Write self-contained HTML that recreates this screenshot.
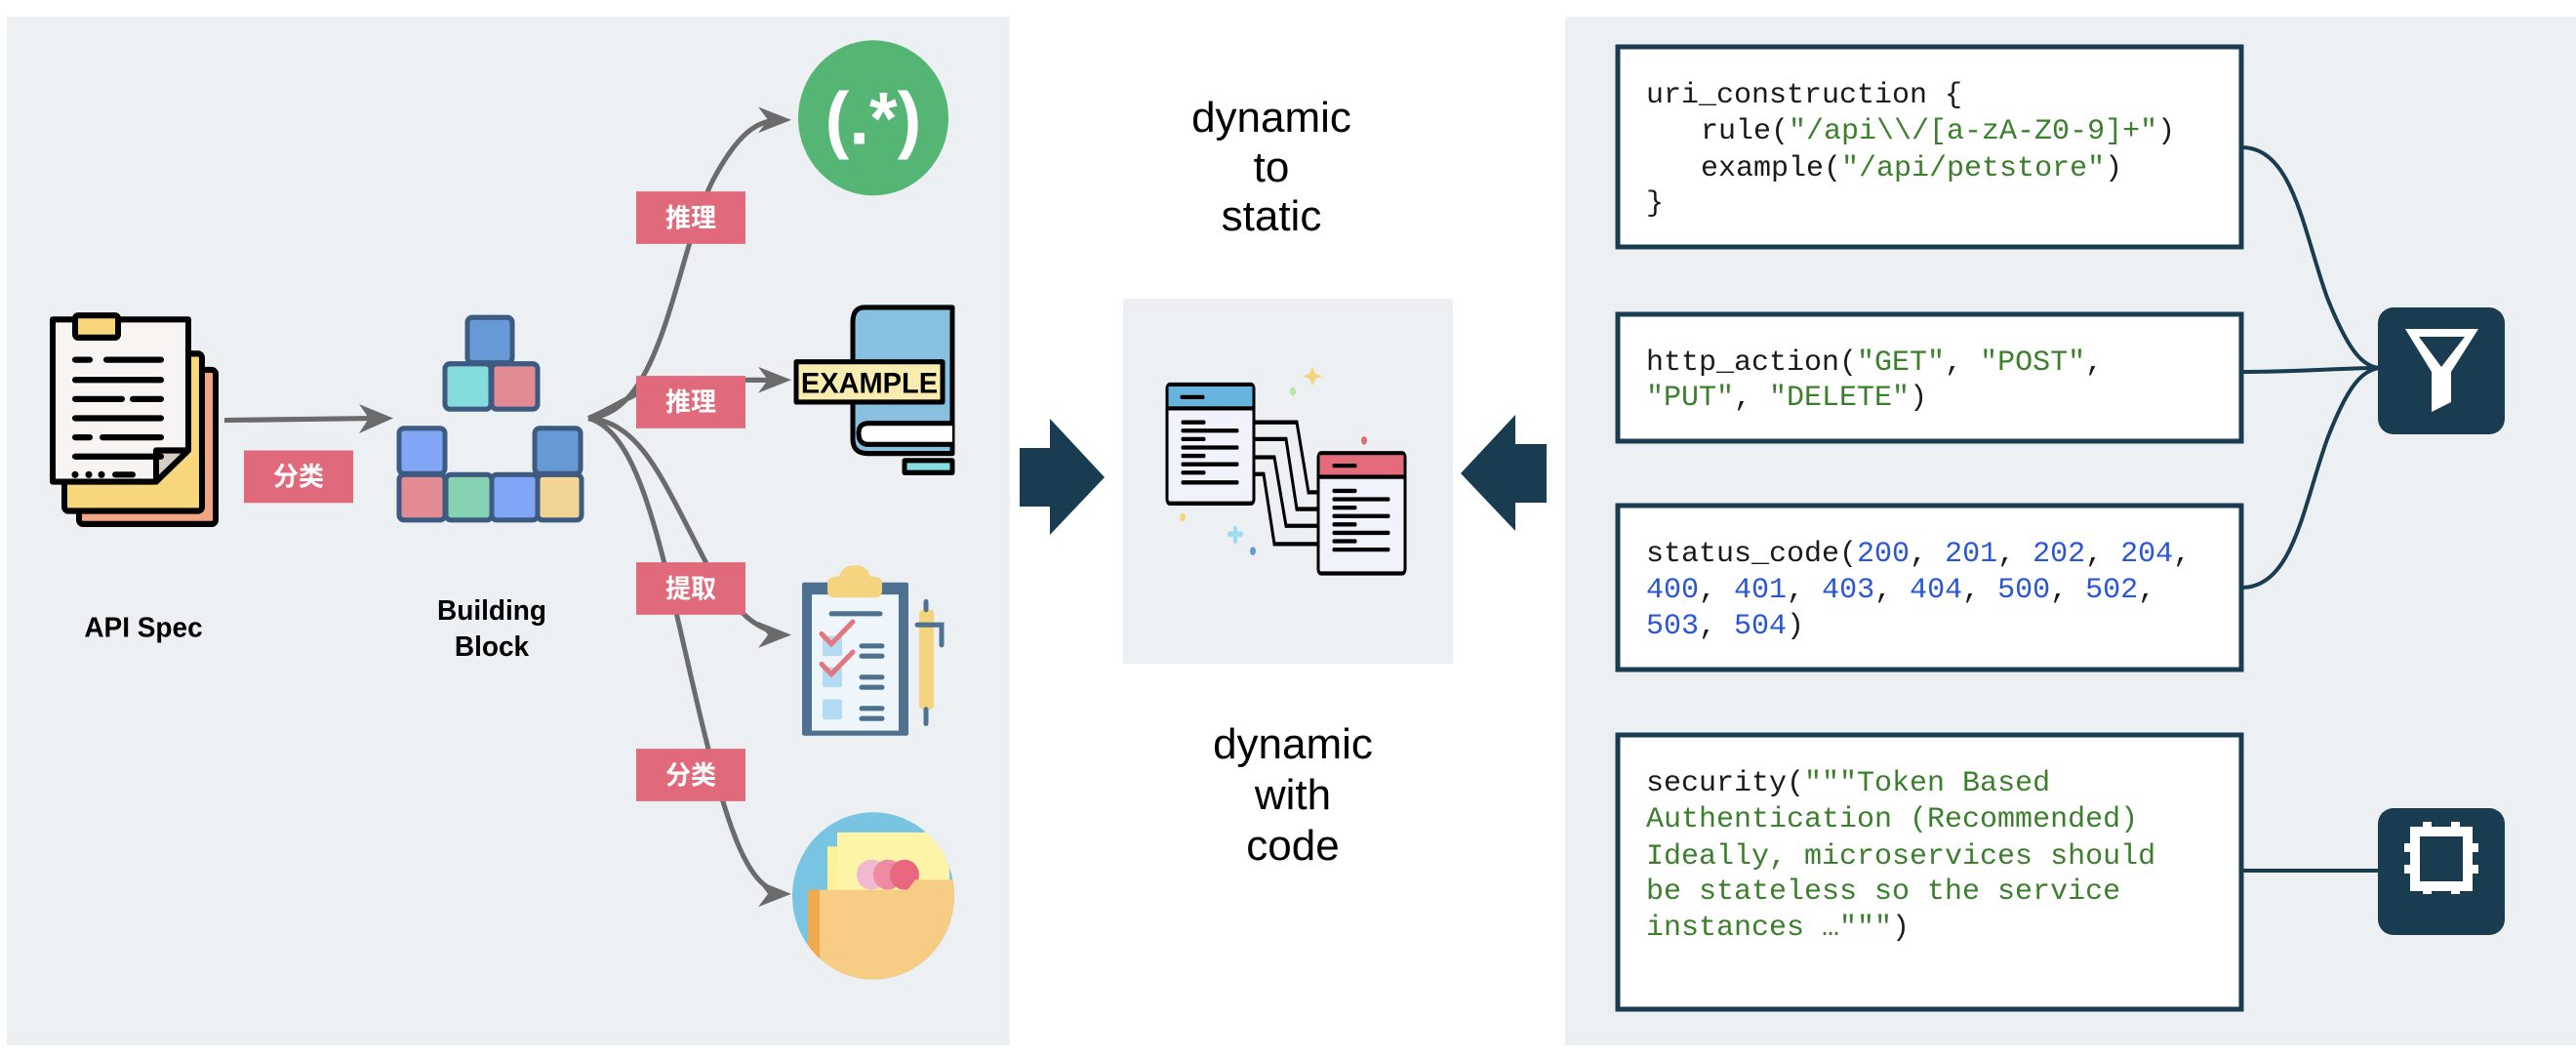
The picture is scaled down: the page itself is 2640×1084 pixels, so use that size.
<!DOCTYPE html>
<html><head><meta charset="utf-8"><style>
html,body{margin:0;padding:0;background:#fff;}
svg{display:block}
.m{font-family:"Liberation Mono",monospace;font-size:30px;}
.s{font-family:"Liberation Sans","DejaVu Sans",sans-serif;}
.cj{font-family:"Liberation Sans","Noto Sans CJK SC",sans-serif;font-weight:bold;font-size:26px;fill:#fff;}
.g{fill:#3b7f2d}.b{fill:#2a56d6}.k{fill:#1a1a1a}
</style></head><body>
<svg width="2640" height="1084" viewBox="0 0 2640 1084" xmlns="http://www.w3.org/2000/svg">
<rect width="2640" height="1084" fill="#fff"/>
<rect x="7" y="17" width="1028" height="1054" fill="#edf0f3"/>
<rect x="1604" y="17" width="1036" height="1054" fill="#edf0f3"/>

<g transform="scale(1,1.0325)">
<!-- API spec doc -->
<g stroke="#000" stroke-width="6" stroke-linejoin="round">
<rect x="81" y="367" width="140" height="153" fill="#f2a582" rx="4"/>
<rect x="66" y="351" width="141" height="156" fill="#f8d77c" rx="4"/>
<path d="M54 317 H193 V445 L160 478 H54 Z" fill="#f7f4f2"/>
<path d="M160 478 V447 H193 Z" fill="#d5ccc6"/>
<rect x="77" y="313" width="44" height="22" fill="#f8d77c" rx="3"/>
</g>
<g stroke="#000" stroke-width="6" stroke-linecap="round">
<path d="M77 357h15M109 357h56M77 377h88M77 396h48M136 396h29M77 415h88M77 434h15M105 434h60M77 453h88M118 471h18"/>
</g>
<g fill="#000"><circle cx="77" cy="471" r="3.5"/><circle cx="91" cy="471" r="3.5"/><circle cx="104" cy="471" r="3.5"/></g>
<text x="147" y="632" class="s" font-size="28" font-weight="bold" text-anchor="middle">API Spec</text>

<path d="M230 417 L390 415" stroke="#6b6b6b" stroke-width="5" fill="none"/>
<path d="M403 415 L368 401 L378 415 L368 430 Z" fill="#6b6b6b"/>
<rect x="250" y="447" width="112" height="52" fill="#e0697b"/>
<text x="306" y="482" class="cj" text-anchor="middle">分类</text>

<g stroke="#3d5a80" stroke-width="5">
<rect x="479" y="315" width="46" height="45" rx="5" fill="#6699d6"/>
<rect x="456" y="361" width="47" height="45" rx="5" fill="#84dcdd"/>
<rect x="504" y="361" width="47" height="45" rx="5" fill="#e28b95"/>
<rect x="409" y="425" width="47" height="45" rx="5" fill="#80a6f5"/>
<rect x="548" y="425" width="47" height="45" rx="5" fill="#6699d6"/>
<rect x="409" y="471" width="47" height="45" rx="5" fill="#e28b95"/>
<rect x="457" y="471" width="47" height="45" rx="5" fill="#86d1b2"/>
<rect x="504" y="471" width="47" height="45" rx="5" fill="#80a6f5"/>
<rect x="551" y="471" width="45" height="45" rx="5" fill="#f2d594"/>
</g>
<text x="504" y="615" class="s" font-size="28" font-weight="bold" text-anchor="middle">Building</text>
<text x="504" y="651" class="s" font-size="28" font-weight="bold" text-anchor="middle">Block</text>

<g stroke="#6b6b6b" stroke-width="5" fill="none">
<path d="M603 415 C680 410 690 260 730 180 C760 125 780 120 800 119"/>
<path d="M603 415 C640 400 650 385 700 380 C750 375 780 378 800 377"/>
<path d="M603 415 C660 420 680 480 730 570 C760 615 780 625 800 629"/>
<path d="M603 415 C660 430 680 560 720 720 C750 840 770 880 800 886"/>
</g>
<g fill="#6b6b6b">
<path d="M811 119 L777 106 L787 119 L777 132 Z"/>
<path d="M811 377 L777 364 L787 377 L777 390 Z"/>
<path d="M811 630 L777 617 L787 630 L777 643 Z"/>
<path d="M811 887 L777 874 L787 887 L777 900 Z"/>
</g>
<g fill="#e0697b">
<rect x="652" y="190" width="112" height="52"/>
<rect x="652" y="373" width="112" height="52"/>
<rect x="652" y="558" width="112" height="52"/>
<rect x="652" y="743" width="112" height="52"/>
</g>
<text x="708" y="225" class="cj" text-anchor="middle">推理</text>
<text x="708" y="408" class="cj" text-anchor="middle">推理</text>
<text x="708" y="593" class="cj" text-anchor="middle">提取</text>
<text x="708" y="778" class="cj" text-anchor="middle">分类</text>

<circle cx="895" cy="117" r="77" fill="#55b574"/>
<text x="895" y="143" class="s" font-size="74" font-weight="bold" fill="#fff" text-anchor="middle">(.*)</text>

<g stroke="#000" stroke-width="5" stroke-linejoin="round">
<path d="M886 305 H976 V450 H890 Q874 450 874 436 V320 Q874 305 886 305 Z" fill="#88c1e0"/>
<path d="M976 420 H890 Q880 420 880 430 Q880 441 890 441 H976" fill="#fff"/>
<rect x="927" y="457" width="49" height="12" fill="#87dde6"/>
<rect x="816" y="359" width="150" height="40" fill="#f9ecb0"/>
</g>
<text x="891" y="390" class="s" font-size="29" font-weight="bold" text-anchor="middle" fill="#000">EXAMPLE</text>

<rect x="822" y="578" width="109" height="152" fill="#4f7190" rx="2"/>
<rect x="832" y="590" width="89" height="135" fill="#eef5fb"/>
<path d="M848 578 Q848 572 860 572 Q863 561 876 561 Q889 561 892 572 Q904 572 904 578 V586 Q904 593 897 593 H855 Q848 593 848 586 Z" fill="#f6d47f"/>
<g stroke="#4f7190" stroke-width="5" stroke-linecap="round"><path d="M852 609h50M883 641h21M883 651h21M883 672h21M883 682h21M883 703h21M883 713h21"/></g>
<g fill="#b3dbf4"><rect x="843" y="631" width="20" height="20" rx="2"/><rect x="843" y="662" width="20" height="20" rx="2"/><rect x="843" y="694" width="20" height="20" rx="2"/></g>
<g stroke="#e27681" stroke-width="5" fill="none" stroke-linecap="round"><path d="M842 629l10 10 22-22M842 659l10 10 22-22"/></g>
<rect x="942" y="605" width="15" height="99" rx="4" fill="#f6d47f"/>
<path d="M949 597v8M949 704v14M940 620h25v20" stroke="#4f7190" stroke-width="5" fill="none" stroke-linecap="round"/>

<circle cx="895" cy="889" r="83" fill="#78c4e2"/>
<clipPath id="fc"><circle cx="895" cy="889" r="83"/></clipPath>
<g clip-path="url(#fc)">
<rect x="848" y="840" width="120" height="60" fill="#fdf19a"/>
<rect x="858" y="826" width="115" height="70" fill="#fef4a8"/>
<circle cx="893" cy="868" r="15" fill="#f2b8cf"/><circle cx="910" cy="868" r="15" fill="#ef8aa3"/><circle cx="927" cy="868" r="15" fill="#e7687f"/>
<path d="M836 883 H930 L938 873 H990 V980 H836 Z" fill="#f7cd85"/>
<rect x="828" y="883" width="12" height="100" fill="#f1a94e"/>
</g>
</g>

<!-- middle -->
<text class="s" font-size="44" text-anchor="middle" fill="#000"><tspan x="1303" y="135">dynamic</tspan><tspan x="1303" y="186">to</tspan><tspan x="1303" y="236">static</tspan></text>
<rect x="1151" y="306" width="338" height="374" fill="#ecf0f3"/>
<path d="M1045 459 H1076 V429 L1132 489 L1076 548 V519 H1045 Z" fill="#193c50"/>
<path d="M1585 455 H1553 V425 L1497 485 L1553 544 V515 H1585 Z" fill="#193c50"/>
<g transform="translate(4,60) scale(1,1.4334) translate(0,-60)">
<g stroke="#000" stroke-width="3" fill="none">
<path d="M1281 320 H1325 L1337 370 H1347 M1281 332 H1314 L1325 382 H1347 M1281 345 H1302 L1314 394 H1347 M1281 357 H1291 L1302 407 H1347"/>
</g>
<g stroke="#000" stroke-width="3">
<rect x="1192" y="293" width="89" height="85" rx="3" fill="#f0f3fb"/>
<rect x="1193.5" y="294.5" width="86" height="14" fill="#65b5df" stroke="none"/>
<line x1="1192" y1="310" x2="1281" y2="310"/>
<rect x="1347" y="342" width="89" height="86" rx="3" fill="#f0f3fb"/>
<rect x="1348.5" y="343.5" width="86" height="14" fill="#e46b7a" stroke="none"/>
<line x1="1347" y1="359" x2="1436" y2="359"/>
</g>
<g stroke="#000" stroke-width="3" stroke-linecap="round">
<path d="M1207 302h22M1208 320h22M1208 326h56M1208 332h22M1208 338h56M1208 344h22M1208 350h56M1208 356h22M1208 363h56"/>
<path d="M1363 351h22M1363 369h22M1363 375h56M1363 381h22M1363 387h56M1363 393h22M1363 399h56M1363 405h22M1363 411h56"/>
</g>
<circle cx="1321" cy="298" r="3" fill="#bfe39b"/><circle cx="1394" cy="333" r="3" fill="#e46b7a"/><circle cx="1208" cy="388" r="3" fill="#f6d47f"/><circle cx="1280" cy="412" r="3" fill="#6699d6"/>
<path d="M1341 280 l3 5 7 2 -7 2 -3 5 -3 -5 -7 -2 7 -2 Z" fill="#f6d47f"/>
<path d="M1262 396v9M1256 400h12" stroke="#9fdcf2" stroke-width="4" stroke-linecap="round"/>
</g>
<text class="s" font-size="44" text-anchor="middle" fill="#000"><tspan x="1325" y="777">dynamic</tspan><tspan x="1325" y="829">with</tspan><tspan x="1325" y="881">code</tspan></text>

<!-- connectors -->
<g stroke="#193c50" stroke-width="4" fill="none">
<path d="M2297 151 C2350 151 2360 235 2385 305 C2405 355 2420 377 2440 377"/>
<path d="M2297 381 C2360 381 2400 377 2440 377"/>
<path d="M2297 602 C2350 602 2360 520 2385 450 C2405 398 2420 378 2440 377"/>
<path d="M2297 892 H2440"/>
</g>

<g fill="#fff" stroke="#193c50" stroke-width="5">
<rect x="1658" y="48" width="639" height="205"/>
<rect x="1658" y="322" width="639" height="130"/>
<rect x="1658" y="518" width="639" height="168"/>
<rect x="1658" y="753" width="639" height="281"/>
</g>
<g class="m" xml:space="preserve">
<text x="1687" y="105" class="k">uri_construction {</text>
<text x="1743" y="142"><tspan class="k">rule(</tspan><tspan class="g">"/api\\/[a-zA-Z0-9]+"</tspan><tspan class="k">)</tspan></text>
<text x="1743" y="180"><tspan class="k">example(</tspan><tspan class="g">"/api/petstore"</tspan><tspan class="k">)</tspan></text>
<text x="1687" y="216" class="k">}</text>
<text x="1687" y="379"><tspan class="k">http_action(</tspan><tspan class="g">"GET"</tspan><tspan class="k">, </tspan><tspan class="g">"POST"</tspan><tspan class="k">,</tspan></text>
<text x="1687" y="415"><tspan class="g">"PUT"</tspan><tspan class="k">, </tspan><tspan class="g">"DELETE"</tspan><tspan class="k">)</tspan></text>
<text x="1687" y="575"><tspan class="k">status_code(</tspan><tspan class="b">200</tspan><tspan class="k">, </tspan><tspan class="b">201</tspan><tspan class="k">, </tspan><tspan class="b">202</tspan><tspan class="k">, </tspan><tspan class="b">204</tspan><tspan class="k">,</tspan></text>
<text x="1687" y="612"><tspan class="b">400</tspan><tspan class="k">, </tspan><tspan class="b">401</tspan><tspan class="k">, </tspan><tspan class="b">403</tspan><tspan class="k">, </tspan><tspan class="b">404</tspan><tspan class="k">, </tspan><tspan class="b">500</tspan><tspan class="k">, </tspan><tspan class="b">502</tspan><tspan class="k">,</tspan></text>
<text x="1687" y="649"><tspan class="b">503</tspan><tspan class="k">, </tspan><tspan class="b">504</tspan><tspan class="k">)</tspan></text>
<text x="1687" y="810"><tspan class="k">security(</tspan><tspan class="g">"""Token Based</tspan></text>
<text x="1687" y="847" class="g">Authentication (Recommended)</text>
<text x="1687" y="885" class="g">Ideally, microservices should</text>
<text x="1687" y="921" class="g">be stateless so the service</text>
<text x="1687" y="958"><tspan class="g">instances …"""</tspan><tspan class="k">)</tspan></text>
</g>

<rect x="2437" y="315" width="130" height="130" rx="16" fill="#193c50"/>
<path d="M2465 337 H2540 L2512 381 V412 L2492 422 V381 Z M2479 345 L2502 376 L2526 345 Z" fill="#fff" fill-rule="evenodd"/>
<rect x="2437" y="828" width="130" height="130" rx="16" fill="#193c50"/>
<rect x="2475" y="865" width="54" height="56" fill="none" stroke="#fff" stroke-width="10" transform="translate(0,-13)"/>
<g fill="#fff" transform="translate(0,19)">
<rect x="2483" y="823" width="9" height="10"/><rect x="2512" y="823" width="9" height="10"/>
<rect x="2483" y="887" width="9" height="10"/><rect x="2512" y="887" width="9" height="10"/>
<rect x="2464" y="845" width="11" height="9"/><rect x="2464" y="867" width="11" height="9"/>
<rect x="2529" y="845" width="11" height="9"/><rect x="2529" y="867" width="11" height="9"/>
</g>
</svg>
</body></html>
